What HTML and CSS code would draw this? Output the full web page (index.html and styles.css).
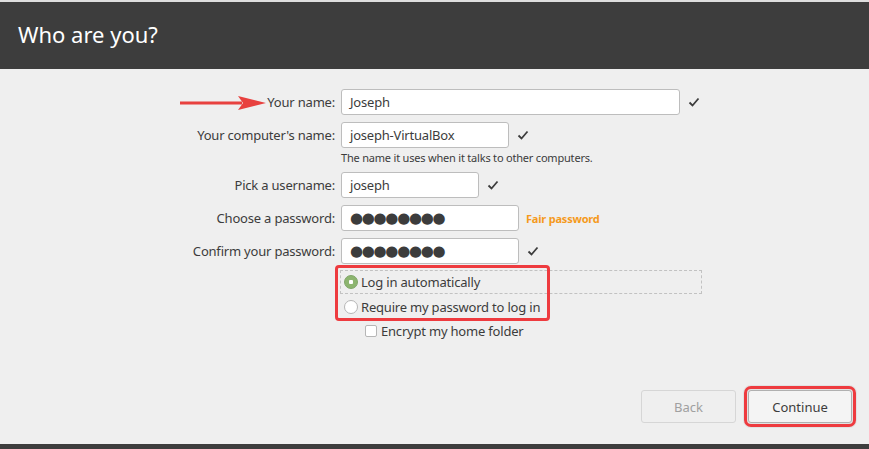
FILE: index.html
```html
<!DOCTYPE html>
<html lang="en">
<head>
  <meta charset="UTF-8">
  <meta name="viewport" content="width=device-width, initial-scale=1.0">
  <title>Who are you?</title>
  <link rel="stylesheet" href="styles.css">
</head>
<body>
  <header class="titlebar">
    <h1>Who are you?</h1>
  </header>

  <main class="page">
    <div class="form">
      <label class="label">
        <svg class="arrow" width="86" height="16" viewBox="0 0 86 16">
          <path d="M0 6.5h62v3H0z" fill="#e8413f"/>
          <path d="M58 1 86 8 58 15 63 8z" fill="#e8413f"/>
        </svg>
        Your name:
      </label>
      <div class="field">
        <div class="entry w-name">Joseph</div>
        <svg class="check" viewBox="0 0 12 12"><path d="M1.5 6.5 4.5 9.5 10.5 2.5"/></svg>
      </div>

      <label class="label">Your computer's name:</label>
      <div class="field-stack">
        <div class="field">
          <div class="entry w-host">joseph-VirtualBox</div>
          <svg class="check" viewBox="0 0 12 12"><path d="M1.5 6.5 4.5 9.5 10.5 2.5"/></svg>
        </div>
        <p class="hint">The name it uses when it talks to other computers.</p>
      </div>

      <label class="label">Pick a username:</label>
      <div class="field">
        <div class="entry w-user">joseph</div>
        <svg class="check" viewBox="0 0 12 12"><path d="M1.5 6.5 4.5 9.5 10.5 2.5"/></svg>
      </div>

      <label class="label">Choose a password:</label>
      <div class="field">
        <div class="entry w-pass dots">●●●●●●●●</div>
        <span class="strength">Fair password</span>
      </div>

      <label class="label">Confirm your password:</label>
      <div class="field">
        <div class="entry w-pass dots">●●●●●●●●</div>
        <svg class="check" viewBox="0 0 12 12"><path d="M1.5 6.5 4.5 9.5 10.5 2.5"/></svg>
      </div>

      <div></div>
      <div class="options">
        <div class="radios">
          <span class="highlight"></span>
          <div class="option focused">
            <span class="radio checked"></span>
            Log in automatically
          </div>
          <div class="option">
            <span class="radio"></span>
            Require my password to log in
          </div>
        </div>
        <div class="option indent">
          <span class="checkbox"></span>
          Encrypt my home folder
        </div>
      </div>
    </div>

    <div class="actions">
      <button class="btn" disabled>Back</button>
      <button class="btn primary">Continue</button>
    </div>
  </main>

  <footer class="bottombar"></footer>
</body>
</html>
```

FILE: styles.css
```css
body, html {
  margin: 0;
  padding: 0;
  height: 100vh;
  font-family: "Noto Sans", "Open Sans", sans-serif;
  font-size: 13px;
  letter-spacing: -0.2px;
  color: #3c3c3c;
  background: #efefef;
}

body {
  display: flex;
  flex-direction: column;
  overflow: hidden;
}

.titlebar {
  border-top: 2px solid #dedede;
  background: #3d3d3d;
  height: 67px;
  display: flex;
  align-items: center;
  padding-left: 18px;
}

.titlebar h1 {
  margin: 0;
  font-size: 22px;
  font-weight: normal;
  letter-spacing: 0;
  color: #ffffff;
  padding-bottom: 3px;
}

.page {
  flex-grow: 1;
  display: flex;
  flex-direction: column;
  justify-content: space-between;
}

.form {
  display: grid;
  grid-template-columns: 335px auto;
  column-gap: 6px;
  row-gap: 7px;
  padding-top: 20px;
}

.label {
  display: flex;
  align-items: center;
  justify-content: flex-end;
  height: 26px;
  gap: 1px;
}

.arrow {
  margin-top: 1px;
}

.field {
  display: flex;
  align-items: center;
  gap: 8px;
}

.field-stack {
  display: flex;
  flex-direction: column;
}

.entry {
  box-sizing: border-box;
  height: 26px;
  padding: 0 8px;
  display: flex;
  align-items: center;
  background: #fff;
  border: 1px solid #bdbdbd;
  border-radius: 3px;
}

.w-name { width: 339px; }
.w-host { width: 168px; }
.w-user { width: 138px; }
.w-pass { width: 178px; }

.dots {
  font-family: "DejaVu Sans", sans-serif;
  font-size: 15px;
  letter-spacing: -1.3px;
  padding-left: 8px;
}

.check {
  width: 12px;
  height: 12px;
  fill: none;
  stroke: #3c3c3c;
  stroke-width: 1.8;
}

.hint {
  margin: 3px 0 0;
  font-size: 11px;
  line-height: 14px;
}

.strength {
  margin-left: -1px;
  font-size: 11px;
  font-weight: bold;
  color: #f59a1c;
}

.options {
  display: flex;
  flex-direction: column;
  margin-left: -1px;
  margin-top: -1px;
}

.radios {
  position: relative;
  display: flex;
  flex-direction: column;
}

.highlight {
  position: absolute;
  left: -5px;
  top: -5px;
  width: 209px;
  height: 50px;
  border: 3px solid #ee3b3f;
  border-radius: 4px;
}

.option {
  display: flex;
  align-items: center;
  gap: 3px;
  height: 24px;
  padding-left: 4px;
  box-sizing: border-box;
}

.option + .option {
  margin-top: 1px;
}

.focused {
  width: 362px;
  border: 1px dashed #c2c2c2;
  padding-left: 3px;
}

.radio {
  box-sizing: border-box;
  width: 14px;
  height: 14px;
  border-radius: 50%;
  border: 1px solid #b6b6b6;
  background: #fff;
}

.radio.checked {
  border-color: #7ea566;
  background: radial-gradient(circle, #fff 0 2px, #8db570 2.5px);
}

.indent {
  padding-left: 25px;
  gap: 4px;
}

.checkbox {
  box-sizing: border-box;
  width: 12px;
  height: 12px;
  border: 1px solid #b6b6b6;
  border-radius: 2px;
  background: #fff;
}

.actions {
  display: flex;
  justify-content: flex-end;
  gap: 12px;
  padding: 0 17px 21px 0;
}

.btn {
  box-sizing: border-box;
  height: 33px;
  width: 95px;
  font-family: inherit;
  font-size: 13px;
  color: #3c3c3c;
  background: #f4f4f4;
  border: 1px solid #b0b0b0;
  border-radius: 3px;
}

.btn:disabled {
  color: #a0a0a0;
  background: #efefef;
  border-color: #d6d6d6;
}

.btn.primary {
  width: 104px;
  outline: 3px solid #ee3b3f;
  outline-offset: 1px;
  box-shadow: 0 0 0 5px rgba(0, 0, 0, 0.05);
}

.bottombar {
  height: 5px;
  background: #3d3d3d;
}
```
